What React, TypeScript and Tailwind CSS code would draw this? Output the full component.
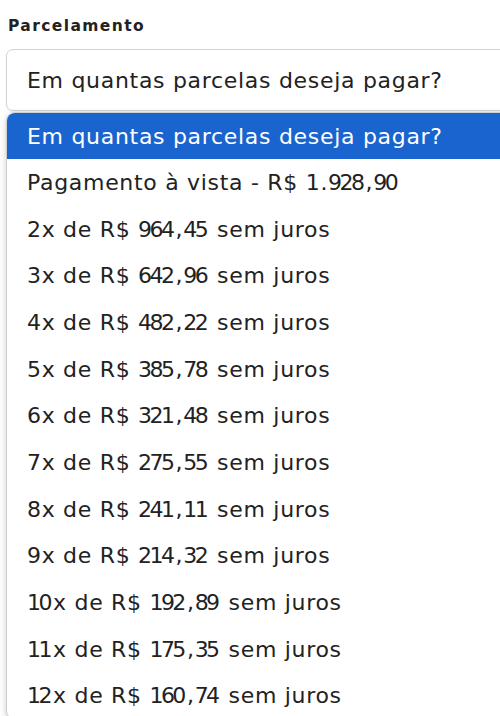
import React from "react";

const options = [
  "Pagamento à vista - R$ 1.928,90",
  "2x de R$ 964,45 sem juros",
  "3x de R$ 642,96 sem juros",
  "4x de R$ 482,22 sem juros",
  "5x de R$ 385,78 sem juros",
  "6x de R$ 321,48 sem juros",
  "7x de R$ 275,55 sem juros",
  "8x de R$ 241,11 sem juros",
  "9x de R$ 214,32 sem juros",
  "10x de R$ 192,89 sem juros",
  "11x de R$ 175,35 sem juros",
  "12x de R$ 160,74 sem juros",
];

function Txt({ s }: { s: string }) {
  const parts = s.split(/(\d+)/);
  return (
    <span>
      {parts.map((p, i) =>
        /^\d+$/.test(p) ? (
          <span key={i}>
            <span className="tracking-[-2.6px]">{p.slice(0, -1)}</span>
            {p.slice(-1)}
          </span>
        ) : (
          <span key={i}>{p}</span>
        )
      )}
    </span>
  );
}

export default function App() {
  return (
    <div
      className="w-[500px] h-[716px] overflow-hidden bg-white text-[#222]"
      style={{ fontFamily: "'DejaVu Sans', 'Noto Sans', sans-serif" }}
    >
      <div className="pl-[8px] pt-[16px] text-[15.5px] font-bold leading-[20px] tracking-[1.4px] text-[#222]">
        Parcelamento
      </div>
      <div className="ml-[6px] mt-[13px] w-[520px] h-[62px] rounded-[7px] border border-[#d4d4d4] flex items-center pl-[20px] text-[22px] tracking-[0.7px] shadow-[0_1px_2px_rgba(0,0,0,0.08)]">
        Em quantas parcelas deseja pagar?
      </div>
      <div className="ml-[6px] mt-[1px] w-[520px] rounded-[9px] border border-[#cfcfcf] bg-white shadow-[0_2px_6px_rgba(0,0,0,0.2)] overflow-hidden">
        <div className="h-[46px] bg-[#1a64d0] text-white flex items-center pl-[20px] text-[22px] tracking-[0.7px]">
          Em quantas parcelas deseja pagar?
        </div>
        {options.map((o) => (
          <div key={o} className="h-[46.7px] flex items-center pl-[20px] text-[22px] tracking-[0.7px] text-[#222]">
            <Txt s={o} />
          </div>
        ))}
      </div>
    </div>
  );
}
